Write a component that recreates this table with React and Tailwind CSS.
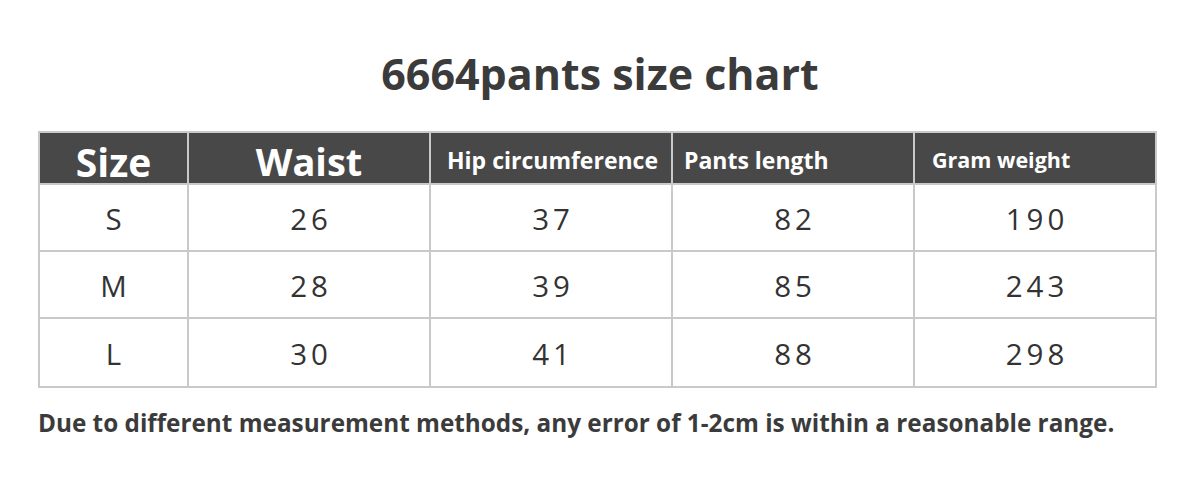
export default function App() {
  const rows = [
    ["S", "26", "37", "82", "190"],
    ["M", "28", "39", "85", "243"],
    ["L", "30", "41", "88", "298"],
  ];

  return (
    <div className="w-[1200px] h-[495px] bg-white text-[#3b3b3b] font-['Open_Sans','Noto_Sans',sans-serif] flex flex-col">
      <h1 className="mt-[46px] h-[54px] flex items-center justify-center text-[43px] font-bold leading-none">
        6664pants size chart
      </h1>

      <div className="mt-[31px] ml-[38px] w-[1119px] border-2 border-[#c9c9c9]">
        <div className="grid grid-cols-[149px_242px_242px_242px_240px] h-[52px] bg-[#484848] text-white font-bold border-b-2 border-[#c9c9c9]">
          <div className="flex items-center justify-center text-[39px] border-r-2 border-[#c9c9c9]">Size</div>
          <div className="flex items-center justify-center text-[38px] pb-[2px] border-r-2 border-[#c9c9c9]">Waist</div>
          <div className="flex items-center pl-[16px] text-[23px] pb-[4px] border-r-2 border-[#c9c9c9]">Hip circumference</div>
          <div className="flex items-center pl-[11px] text-[23px] pb-[5px] border-r-2 border-[#c9c9c9]">Pants length</div>
          <div className="flex items-center pl-[17px] text-[21.5px] pb-[4px]">Gram weight</div>
        </div>
        {rows.map((r, i) => (
          <div
            key={r[0]}
            className={
              "grid grid-cols-[149px_242px_242px_242px_240px] h-[67px] text-[29.5px] tracking-[4px] text-[#333] " +
              (i < rows.length - 1 ? "border-b-2 border-[#c9c9c9]" : "")
            }
          >
            {r.map((c, j) => (
              <div
                key={j}
                className={
                  "flex items-center justify-center pl-[4px] pt-[3px] " +
                  (j < r.length - 1 ? "border-r-2 border-[#c9c9c9]" : "")
                }
              >
                {c}
              </div>
            ))}
          </div>
        ))}
      </div>

      <p className="mt-[23px] ml-[38px] text-[24.3px] font-bold text-[#3b3b3b] leading-none">
        Due to different measurement methods, any error of 1-2cm is within a reasonable range.
      </p>
    </div>
  );
}
